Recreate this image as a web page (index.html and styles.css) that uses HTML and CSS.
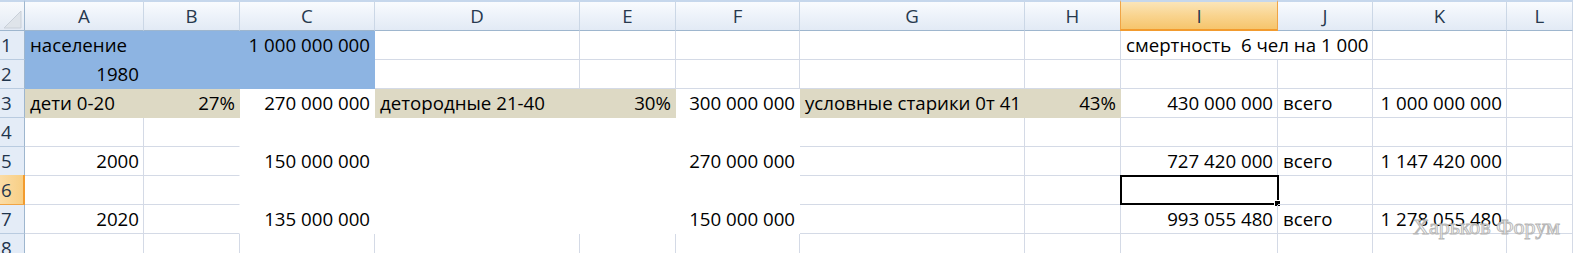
FILE: index.html
```html
<!DOCTYPE html>
<html lang="ru">
<head>
<meta charset="utf-8">
<title>Лист Excel</title>
<link rel="stylesheet" href="styles.css">
</head>
<body>
<div class="sheet">
  <div class="corner"><svg width="24" height="28" viewBox="0 0 24 28"><polygon points="21,9 21,26 4,26" fill="#dfe4ea" stroke="#c9d0d9" stroke-width="1"/></svg></div>
  <div class="h">A</div><div class="h">B</div><div class="h">C</div><div class="h">D</div><div class="h">E</div><div class="h">F</div><div class="h">G</div><div class="h">H</div><div class="h hs">I</div><div class="h">J</div><div class="h">K</div><div class="h">L</div>

  <div class="rh">1</div>
  <div class="c blue">население</div><div class="c blue"></div><div class="c blue r">1 000 000 000</div>
  <div class="c"></div><div class="c"></div><div class="c"></div><div class="c"></div><div class="c"></div>
  <div class="c span2">смертность  6 чел на 1 000</div><div class="c"></div><div class="c"></div>

  <div class="rh">2</div>
  <div class="c blue r">1980</div><div class="c blue"></div><div class="c blue"></div>
  <div class="c"></div><div class="c"></div><div class="c"></div><div class="c"></div><div class="c"></div>
  <div class="c"></div><div class="c"></div><div class="c"></div><div class="c"></div>

  <div class="rh">3</div>
  <div class="c tan">дети 0-20</div><div class="c tan r">27%</div><div class="c w r">270 000 000</div>
  <div class="c tan">детородные 21-40</div><div class="c tan r">30%</div><div class="c w r">300 000 000</div>
  <div class="c tan">условные старики 0т 41</div><div class="c tan r">43%</div>
  <div class="c r">430 000 000</div><div class="c">всего</div><div class="c r">1 000 000 000</div><div class="c"></div>

  <div class="rh">4</div>
  <div class="c"></div><div class="c nr"></div><div class="c w"></div><div class="c w"></div><div class="c w"></div><div class="c w"></div>
  <div class="c"></div><div class="c"></div><div class="c"></div><div class="c"></div><div class="c"></div><div class="c"></div>

  <div class="rh">5</div>
  <div class="c r">2000</div><div class="c nr"></div><div class="c w r">150 000 000</div><div class="c w"></div><div class="c w"></div><div class="c w r">270 000 000</div>
  <div class="c"></div><div class="c"></div><div class="c r">727 420 000</div><div class="c">всего</div><div class="c r">1 147 420 000</div><div class="c"></div>

  <div class="rh rhs">6</div>
  <div class="c"></div><div class="c nr"></div><div class="c w"></div><div class="c w"></div><div class="c w"></div><div class="c w"></div>
  <div class="c"></div><div class="c"></div><div class="c sel"><span class="handle"></span></div><div class="c"></div><div class="c"></div><div class="c"></div>

  <div class="rh">7</div>
  <div class="c r">2020</div><div class="c nr"></div><div class="c w r">135 000 000</div><div class="c w"></div><div class="c w"></div><div class="c w r">150 000 000</div>
  <div class="c"></div><div class="c"></div><div class="c r">993 055 480</div><div class="c">всего</div><div class="c r">1 278 055 480</div><div class="c"></div>

  <div class="rh">8</div>
  <div class="c"></div><div class="c"></div><div class="c"></div><div class="c"></div><div class="c"></div><div class="c"></div>
  <div class="c"></div><div class="c"></div><div class="c"></div><div class="c"></div><div class="c"></div><div class="c"></div>
</div>
<div class="watermark">Харьков Форум</div>
</body>
</html>
```

FILE: styles.css
```css
html, body {
  margin: 0;
  padding: 0;
  background: #ffffff;
}

body {
  position: relative;
  width: 1573px;
  height: 253px;
  overflow: hidden;
  font-family: "Open Sans", "Liberation Sans", sans-serif;
  font-size: 18.7px;
  color: #000000;
}

.sheet {
  display: grid;
  grid-template-columns: 25px 119px 96px 135px 205px 96px 124px 225px 96px 157px 95px 134px 66px;
  grid-template-rows: 31px repeat(8, 29px);
  width: 1573px;
}

.sheet > div {
  box-sizing: border-box;
  white-space: pre;
  line-height: 28px;
}

.corner {
  background: linear-gradient(#f7f9fc, #e3eaf4);
  border-top: 2px solid #c6d7ec;
  border-right: 1px solid #9eb6ce;
  border-bottom: 1px solid #9eb6ce;
  display: flex;
  align-items: flex-end;
  justify-content: flex-end;
  overflow: hidden;
}

.corner svg {
  display: block;
}

.h {
  background: linear-gradient(#f9fbfe 0%, #eef3fa 45%, #e2eaf5 100%);
  border-top: 2px solid #c6d7ec;
  border-right: 1px solid #cbd7e6;
  border-bottom: 1px solid #9eb6ce;
  text-align: center;
  color: #27394e;
}

.hs {
  background: linear-gradient(#fbe5b9 0%, #f9d48f 50%, #f6c56c 100%);
  border-left: 1px solid #f0a445;
  border-right: 1px solid #f0a445;
  border-bottom: 2px solid #f29b2e;
  margin-left: -1px;
}

.rh {
  background: #e4ecf7;
  border-right: 1px solid #9eb6ce;
  border-bottom: 1px solid #b9cbe0;
  padding-left: 1px;
  color: #1f354d;
}

.rhs {
  background: linear-gradient(90deg, #fbdca6, #f8cf85);
  border-bottom: 1px solid #f0a445;
  border-right: 2px solid #f29b2e;
  margin-top: -1px;
  line-height: 30px !important;
}

.c {
  border-right: 1px solid #d4dae6;
  border-bottom: 1px solid #d4dae6;
  padding: 0 4px 0 5px;
  overflow: visible;
  position: relative;
}

.r {
  text-align: right;
}

.span2 {
  grid-column: span 2;
  overflow: visible;
}

.blue {
  background: #8db4e2;
  border-color: #8db4e2;
}

.tan {
  background: #ddd9c4;
  border-color: #ddd9c4;
}

.w {
  border-color: #ffffff;
}

.nr {
  border-right-color: #ffffff;
}

.sel {
  box-shadow: inset 0 0 0 2px #000000;
  margin: -1px -1px 0 -1px;
  border: none;
  height: 30px;
}

.handle {
  position: absolute;
  right: -2px;
  bottom: -2px;
  width: 5px;
  height: 5px;
  background: #000000;
  border: 1px solid #ffffff;
}

.watermark {
  position: absolute;
  left: 1413px;
  top: 214px;
  font-family: "Liberation Serif", "DejaVu Serif", serif;
  font-size: 22px;
  color: rgba(255, 255, 255, 0.75);
  -webkit-text-stroke: 1px #b8b8b8;
  white-space: nowrap;
}
```
